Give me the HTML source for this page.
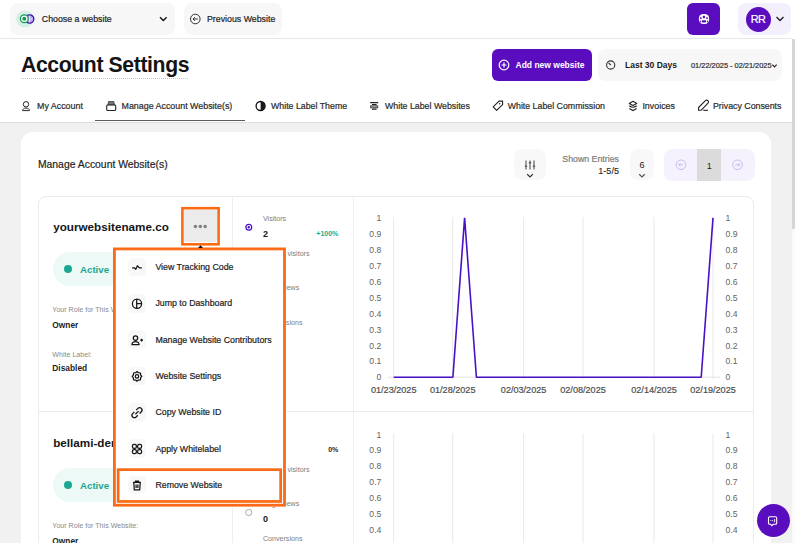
<!DOCTYPE html>
<html><head><meta charset="utf-8">
<style>
*{box-sizing:border-box;margin:0;padding:0}
html,body{width:795px;height:543px;overflow:hidden;background:#fff}
body{position:relative;font-family:"Liberation Sans",sans-serif;color:#1f1f1f}
.a{position:absolute}
.t{position:absolute;white-space:nowrap;line-height:1}
svg{position:absolute;overflow:visible}
</style></head>
<body>
<div class="a" style="left:0px;top:122px;width:792px;height:421px;background:#f1f1f1;border-radius:0px;"></div>
<div class="a" style="left:0px;top:122px;width:792px;height:1px;background:#dedede;border-radius:0px;"></div>
<div class="a" style="left:792px;top:39px;width:3px;height:504px;background:#fafafa;border-radius:0px;"></div>
<div class="a" style="left:792px;top:39px;width:3px;height:189.6px;background:#d6d6d6;border-radius:0px;"></div>
<div class="a" style="left:10px;top:3px;width:164.8px;height:32px;background:#f7f7f7;border-radius:8px;"></div>
<svg style="left:0px;top:0px" width="795" height="543" viewBox="0 0 795 543">
  <circle cx="24.9" cy="18.9" r="8.7" fill="#d6efe3"/>
  <circle cx="29.6" cy="19" r="4.2" fill="#b9a6ee" stroke="#3b0eb2" stroke-width="1.3"/>
  <path d="M27.5 19 H32.5 M29.6 15.5 V22.5" stroke="#fff" stroke-width="0.6"/>
  <circle cx="24.3" cy="18.7" r="3.9" fill="#fff" stroke="#139a55" stroke-width="1.3"/>
  <circle cx="24.3" cy="18.7" r="2" fill="#139a55"/>
  <path d="M160 17.2 L163.3 20.5 L166.6 17.2" fill="none" stroke="#111" stroke-width="1.4"/>
</svg>
<div class="t" style="left:41.8px;top:15.00px;font-size:8.8px;font-weight:400;color:#222;-webkit-text-stroke:0.2px #222;">Choose a website</div>
<div class="a" style="left:184px;top:3px;width:98px;height:32px;background:#f7f7f7;border-radius:8px;"></div>
<svg style="left:0px;top:0px" width="795" height="543" viewBox="0 0 795 543">
  <circle cx="195.3" cy="19" r="4.8" fill="none" stroke="#333" stroke-width="1"/>
  <path d="M197.8 19 H193 M194.8 17.2 L193 19 L194.8 20.8" fill="none" stroke="#333" stroke-width="1"/>
</svg>
<div class="t" style="left:207px;top:15.00px;font-size:8.8px;font-weight:400;color:#222;-webkit-text-stroke:0.2px #222;">Previous Website</div>
<div class="a" style="left:687px;top:3px;width:33px;height:32px;background:#5a0cbf;border-radius:6px;"></div>
<svg style="left:0px;top:0px" width="795" height="543" viewBox="0 0 795 543"><rect x="698.9" y="14" width="10.2" height="9.9" rx="4.2" fill="#fff"/>
  <g fill="#5a0cbf">
    <circle cx="703.9" cy="17" r="1.3"/>
    <circle cx="700.8" cy="18.2" r="0.9"/>
    <circle cx="707" cy="18.2" r="0.9"/>
    <rect x="701.8" y="20.2" width="4.3" height="2.4" rx="0.8"/>
    <rect x="699.9" y="20.4" width="1" height="2" rx="0.4"/>
    <rect x="707" y="20.4" width="1" height="2" rx="0.4"/>
  </g></svg>
<div class="a" style="left:738px;top:3px;width:53px;height:32px;background:#f3effc;border-radius:8px;"></div>
<div class="a" style="left:745.5px;top:6.5px;width:25.0px;height:25.0px;background:#5a0cbf;border-radius:13px;"></div>
<div class="t" style="left:758px;transform:translateX(-50%);top:14.00px;font-size:10.9px;font-weight:400;color:#fff;letter-spacing:-0.7px;-webkit-text-stroke:0.2px #fff;">RR</div>
<svg style="left:0px;top:0px" width="795" height="543" viewBox="0 0 795 543"><path d="M776.5 17 L780 20.5 L783.5 17" fill="none" stroke="#222" stroke-width="1.4"/></svg>
<div class="a" style="left:0px;top:38px;width:792px;height:1px;background:#e6e6e6;border-radius:0px;"></div>
<div class="t" style="left:21px;top:54.00px;font-size:21.2px;font-weight:700;color:#141414;letter-spacing:-0.38px;">Account Settings</div>
<div class="a" style="left:21px;top:78px;width:168px;height:1px;background:linear-gradient(to right,#c8c8c8 50%,transparent 50%);border-radius:0px;background-size:2px 1px"></div>
<div class="a" style="left:492px;top:49px;width:100px;height:32px;background:#5a0cbf;border-radius:6px;"></div>
<svg style="left:0px;top:0px" width="795" height="543" viewBox="0 0 795 543">
  <circle cx="504" cy="65" r="4.8" fill="none" stroke="#fff" stroke-width="1.2"/>
  <path d="M504 62.5 V67.5 M501.5 65 H506.5" stroke="#fff" stroke-width="1.2"/>
</svg>
<div class="t" style="left:515.5px;top:61.00px;font-size:8.5px;font-weight:700;color:#fff;">Add new website</div>
<div class="a" style="left:598px;top:49px;width:184px;height:32px;background:#f7f7f7;border-radius:8px;"></div>
<svg style="left:0px;top:0px" width="795" height="543" viewBox="0 0 795 543">
  <circle cx="610.7" cy="65" r="4.1" fill="none" stroke="#333" stroke-width="1.1"/>
  <path d="M608.6 62.9 L610.8 65.1" fill="none" stroke="#333" stroke-width="1.3"/>
  <path d="M772.3 64.6 L774.5 66.8 L776.7 64.6" fill="none" stroke="#222" stroke-width="1.2"/>
</svg>
<div class="t" style="left:625px;top:61.00px;font-size:8.5px;font-weight:700;color:#1a1a1a;">Last 30 Days</div>
<div class="t" style="left:691px;top:62.00px;font-size:7.4px;font-weight:400;color:#2e2e2e;-webkit-text-stroke:0.2px #2e2e2e;">01/22/2025 - 02/21/2025</div>
<svg style="left:0px;top:0px" width="795" height="543" viewBox="0 0 795 543">
  <circle cx="26" cy="104.3" r="2.7" fill='none' stroke='#2a2a2a' stroke-width='1' stroke-width="1.1"/>
  <path d="M22.5 110.6 C22.5 107.2 29.5 107.2 29.5 110.6 Z" fill='none' stroke='#2a2a2a' stroke-width='1' stroke-width="1.1"/>
</svg>
<div class="t" style="left:37px;top:102.00px;font-size:8.9px;font-weight:400;color:#2a2a2a;-webkit-text-stroke:0.2px #2a2a2a;">My Account</div>
<svg style="left:0px;top:0px" width="795" height="543" viewBox="0 0 795 543">
  <rect x="106.7" y="104.9" width="9" height="5.6" rx="1.3" fill="none" stroke="#222" stroke-width="1.1"/>
  <path d="M108 104.6 L108.5 101.6 H113.9 L114.4 104.6 Z" fill="#777" stroke="#333" stroke-width="0.8"/>
</svg>
<div class="t" style="left:121.5px;top:102.00px;font-size:8.9px;font-weight:400;color:#2a2a2a;-webkit-text-stroke:0.2px #2a2a2a;">Manage Account Website(s)</div>
<div class="a" style="left:95px;top:119.5px;width:150px;height:1.2999999999999972px;background:#5a5a5a;border-radius:0px;"></div>
<svg style="left:0px;top:0px" width="795" height="543" viewBox="0 0 795 543">
  <circle cx="260.6" cy="106" r="4.5" fill='none' stroke='#111' stroke-width='1.3'/>
  <path d="M260.6 101.5 A4.5 4.5 0 0 1 260.6 110.5 Z" fill="#1a1a1a"/>
</svg>
<div class="t" style="left:271px;top:102.00px;font-size:8.8px;font-weight:400;color:#2a2a2a;-webkit-text-stroke:0.2px #2a2a2a;">White Label Theme</div>
<svg style="left:0px;top:0px" width="795" height="543" viewBox="0 0 795 543">
  <path d="M370.2 102.6 H378.2 M372 104.5 H376.6 M372 109.1 H376.6" fill="none" stroke="#222" stroke-width="1.1"/>
  <rect x="370.6" y="105.8" width="7.2" height="2" fill="#aaa" stroke="#333" stroke-width="0.8"/>
</svg>
<div class="t" style="left:385px;top:102.00px;font-size:8.8px;font-weight:400;color:#2a2a2a;-webkit-text-stroke:0.2px #2a2a2a;">White Label Websites</div>
<svg style="left:0px;top:0px" width="795" height="543" viewBox="0 0 795 543">
  <path d="M499 101.1 H502.6 V104.7 L496.6 110.4 L493.2 106.9 Z" fill="none" stroke="#222" stroke-width="1.1" stroke-linejoin="round"/>
  <circle cx="499.6" cy="103.7" r="0.75" fill="#222"/>
</svg>
<div class="t" style="left:507.7px;top:102.00px;font-size:8.8px;font-weight:400;color:#2a2a2a;-webkit-text-stroke:0.2px #2a2a2a;">White Label Commission</div>
<svg style="left:0px;top:0px" width="795" height="543" viewBox="0 0 795 543">
  <path d="M629.3 103.4 L633 101.3 L636.7 103.4 L633 105.5 Z" fill="none" stroke="#222" stroke-width="1.1" stroke-linejoin="round"/>
  <path d="M629.3 105.8 Q633 108.8 636.7 105.8 M629.3 108.4 L633 110.5 L636.7 108.4" fill="none" stroke="#222" stroke-width="1.1"/>
</svg>
<div class="t" style="left:642.4px;top:102.00px;font-size:8.9px;font-weight:400;color:#2a2a2a;-webkit-text-stroke:0.2px #2a2a2a;">Invoices</div>
<svg style="left:0px;top:0px" width="795" height="543" viewBox="0 0 795 543">
  <path d="M698.5 110.3 L698.6 107.5 L705.4 100.7 A1.6 1.6 0 0 1 708 103.2 L701.3 110.2 Z" fill="none" stroke="#222" stroke-width="1.1" stroke-linejoin="round"/>
  <path d="M703.3 110.3 H708" stroke="#222" stroke-width="1.1"/>
</svg>
<div class="t" style="left:713px;top:102.00px;font-size:8.8px;font-weight:400;color:#2a2a2a;-webkit-text-stroke:0.2px #2a2a2a;">Privacy Consents</div>
<div class="a" style="left:20.5px;top:132px;width:750.0px;height:468px;background:#ffffff;border-radius:12px;"></div>
<div class="t" style="left:37.9px;top:160.00px;font-size:10.4px;font-weight:400;color:#1f1f1f;-webkit-text-stroke:0.2px #1f1f1f;">Manage Account Website(s)</div>
<div class="a" style="left:514px;top:148.8px;width:32px;height:31.69999999999999px;background:#f8f8f8;border-radius:8px;"></div>
<svg style="left:0px;top:0px" width="795" height="543" viewBox="0 0 795 543">
  <path d="M526 160.5 V169.5 M530 160.5 V169.5 M534 160.5 V169.5" fill="none" stroke="#3a3a3a" stroke-width="0.95"/>
  <path d="M524.8 166.2 H527.2 M528.8 162.8 H531.2 M532.8 166.2 H535.2" fill="none" stroke="#3a3a3a" stroke-width="0.95"/>
  <path d="M527.2 174.3 L530 177 L532.8 174.3" fill="none" stroke="#333" stroke-width="1.2"/>
</svg>
<div class="t" style="right:176px;top:155.00px;font-size:8.8px;font-weight:400;color:#7c7c7c;-webkit-text-stroke:0.2px #7c7c7c;">Shown Entries</div>
<div class="t" style="right:176px;top:167.00px;font-size:9.1px;font-weight:400;color:#1f1f1f;-webkit-text-stroke:0.1px #1f1f1f;">1-5/5</div>
<div class="a" style="left:630px;top:148.8px;width:24px;height:31.69999999999999px;background:#f8f8f8;border-radius:8px;"></div>
<div class="t" style="left:642px;transform:translateX(-50%);top:161.00px;font-size:9px;font-weight:400;color:#1a1a1a;">6</div>
<svg style="left:0px;top:0px" width="795" height="543" viewBox="0 0 795 543"><path d="M639.2 174.3 L642 177 L644.8 174.3" fill="none" stroke="#555" stroke-width="1.2"/></svg>
<div class="a" style="left:664.2px;top:148.6px;width:90.39999999999998px;height:32.099999999999994px;background:#f5f2fd;border-radius:8px;"></div>
<div class="a" style="left:697.4px;top:148.6px;width:23.800000000000068px;height:32.099999999999994px;background:#dbdbdb;border-radius:0px;"></div>
<div class="t" style="left:709.3px;transform:translateX(-50%);top:162.00px;font-size:9px;font-weight:400;color:#1a1a1a;">1</div>
<svg style="left:0px;top:0px" width="795" height="543" viewBox="0 0 795 543">
  <circle cx="681" cy="164.8" r="4.8" fill="none" stroke="#cdb9f2" stroke-width="1"/>
  <path d="M683.3 164.8 H678.8 M680.5 163 L678.8 164.8 L680.5 166.6" fill="none" stroke="#cdb9f2" stroke-width="1"/>
  <circle cx="737.5" cy="164.8" r="4.8" fill="none" stroke="#cdb9f2" stroke-width="1"/>
  <path d="M735.2 164.8 H739.7 M738 163 L739.7 164.8 L738 166.6" fill="none" stroke="#cdb9f2" stroke-width="1"/>
</svg>
<div class="a" style="left:38px;top:196px;width:715.5px;height:444px;background:#ffffff;border-radius:8px;border:1px solid #ebebeb"></div>
<div class="a" style="left:38px;top:411px;width:715.5px;height:1px;background:#ebebeb;border-radius:0px;"></div>
<div class="a" style="left:232px;top:196px;width:1px;height:444px;background:#efefef;border-radius:0px;"></div>
<div class="a" style="left:352.5px;top:196px;width:1.0px;height:444px;background:#efefef;border-radius:0px;"></div>
<div class="t" style="left:53.2px;top:221.00px;font-size:11.7px;font-weight:700;color:#161616;">yourwebsitename.co</div>
<div class="a" style="left:53px;top:252px;width:147px;height:34.39999999999998px;background:#ecf9f6;border-radius:17px;"></div>
<div class="a" style="left:64.3px;top:265.2px;width:8px;height:8px;border-radius:50%;background:#1aa890"></div>
<div class="t" style="left:80px;top:265.00px;font-size:9.7px;font-weight:700;color:#1aa890;">Active</div>
<div class="t" style="left:52.3px;top:307.00px;font-size:7.1px;font-weight:400;color:#8a8a8a;">Your Role for This Website:</div>
<div class="t" style="left:52.3px;top:321.00px;font-size:8.4px;font-weight:700;color:#1f1f1f;">Owner</div>
<div class="t" style="left:52.3px;top:352.00px;font-size:7.1px;font-weight:400;color:#8a8a8a;">White Label:</div>
<div class="t" style="left:52.3px;top:364.00px;font-size:8.4px;font-weight:700;color:#1f1f1f;">Disabled</div>
<div class="t" style="left:263px;top:216.00px;font-size:7.1px;font-weight:400;color:#7e7e7e;">Visitors</div>
<div class="t" style="left:263px;top:230.00px;font-size:9px;font-weight:700;color:#161616;">2</div>
<svg style="left:0px;top:0px" width="795" height="543" viewBox="0 0 795 543"><circle cx="248.8" cy="227.3" r="2.9" fill="none" stroke="#4a10c6" stroke-width="1.2"/><circle cx="248.8" cy="227.3" r="1.2" fill="#4a10c6"/></svg>
<div class="t" style="left:263px;top:251.00px;font-size:7.1px;font-weight:400;color:#7e7e7e;">Unique visitors</div>
<div class="t" style="left:263px;top:265.00px;font-size:9px;font-weight:700;color:#161616;">1</div>
<svg style="left:0px;top:0px" width="795" height="543" viewBox="0 0 795 543"><circle cx="248.7" cy="261.9" r="3.1" fill="none" stroke="#a0a0a0" stroke-width="0.9"/></svg>
<div class="t" style="left:263px;top:285.00px;font-size:7.1px;font-weight:400;color:#7e7e7e;">Page views</div>
<div class="t" style="left:263px;top:299.00px;font-size:9px;font-weight:700;color:#161616;">2</div>
<svg style="left:0px;top:0px" width="795" height="543" viewBox="0 0 795 543"><circle cx="248.7" cy="296.5" r="3.1" fill="none" stroke="#a0a0a0" stroke-width="0.9"/></svg>
<div class="t" style="left:263px;top:320.00px;font-size:7.1px;font-weight:400;color:#7e7e7e;">Conversions</div>
<div class="t" style="left:263px;top:334.00px;font-size:9px;font-weight:700;color:#161616;">0</div>
<svg style="left:0px;top:0px" width="795" height="543" viewBox="0 0 795 543"><circle cx="248.7" cy="331.1" r="3.1" fill="none" stroke="#a0a0a0" stroke-width="0.9"/></svg>
<div class="t" style="right:456.7px;top:230.00px;font-size:7px;font-weight:700;color:#16ad8c;">+100%</div>
<svg style="left:0px;top:0px" width="795" height="543" viewBox="0 0 795 543"><line x1="393.7" y1="216.9" x2="393.7" y2="379.7" stroke="#e9e9e9" stroke-width="1"/><line x1="452.7" y1="216.9" x2="452.7" y2="379.7" stroke="#e9e9e9" stroke-width="1"/><line x1="523.6" y1="216.9" x2="523.6" y2="379.7" stroke="#e9e9e9" stroke-width="1"/><line x1="583" y1="216.9" x2="583" y2="379.7" stroke="#e9e9e9" stroke-width="1"/><line x1="654" y1="216.9" x2="654" y2="379.7" stroke="#e9e9e9" stroke-width="1"/><line x1="713" y1="216.9" x2="713" y2="379.7" stroke="#e9e9e9" stroke-width="1"/><line x1="388" y1="377.2" x2="720" y2="377.2" stroke="#e3e3e3" stroke-width="1"/></svg>
<div class="t" style="right:413.7px;top:373.00px;font-size:8.6px;font-weight:400;color:#626262;">0</div>
<div class="t" style="left:725.6px;top:373.00px;font-size:8.6px;font-weight:400;color:#626262;">0</div>
<div class="t" style="right:413.7px;top:357.00px;font-size:8.6px;font-weight:400;color:#626262;">0.1</div>
<div class="t" style="left:725.6px;top:357.00px;font-size:8.6px;font-weight:400;color:#626262;">0.1</div>
<div class="t" style="right:413.7px;top:342.00px;font-size:8.6px;font-weight:400;color:#626262;">0.2</div>
<div class="t" style="left:725.6px;top:342.00px;font-size:8.6px;font-weight:400;color:#626262;">0.2</div>
<div class="t" style="right:413.7px;top:326.00px;font-size:8.6px;font-weight:400;color:#626262;">0.3</div>
<div class="t" style="left:725.6px;top:326.00px;font-size:8.6px;font-weight:400;color:#626262;">0.3</div>
<div class="t" style="right:413.7px;top:310.00px;font-size:8.6px;font-weight:400;color:#626262;">0.4</div>
<div class="t" style="left:725.6px;top:310.00px;font-size:8.6px;font-weight:400;color:#626262;">0.4</div>
<div class="t" style="right:413.7px;top:294.00px;font-size:8.6px;font-weight:400;color:#626262;">0.5</div>
<div class="t" style="left:725.6px;top:294.00px;font-size:8.6px;font-weight:400;color:#626262;">0.5</div>
<div class="t" style="right:413.7px;top:278.00px;font-size:8.6px;font-weight:400;color:#626262;">0.6</div>
<div class="t" style="left:725.6px;top:278.00px;font-size:8.6px;font-weight:400;color:#626262;">0.6</div>
<div class="t" style="right:413.7px;top:262.00px;font-size:8.6px;font-weight:400;color:#626262;">0.7</div>
<div class="t" style="left:725.6px;top:262.00px;font-size:8.6px;font-weight:400;color:#626262;">0.7</div>
<div class="t" style="right:413.7px;top:246.00px;font-size:8.6px;font-weight:400;color:#626262;">0.8</div>
<div class="t" style="left:725.6px;top:246.00px;font-size:8.6px;font-weight:400;color:#626262;">0.8</div>
<div class="t" style="right:413.7px;top:230.00px;font-size:8.6px;font-weight:400;color:#626262;">0.9</div>
<div class="t" style="left:725.6px;top:230.00px;font-size:8.6px;font-weight:400;color:#626262;">0.9</div>
<div class="t" style="right:413.7px;top:214.00px;font-size:8.6px;font-weight:400;color:#626262;">1</div>
<div class="t" style="left:725.6px;top:214.00px;font-size:8.6px;font-weight:400;color:#626262;">1</div>
<div class="t" style="left:393.7px;transform:translateX(-50%);top:386.00px;font-size:9.1px;font-weight:400;color:#4e4e4e;-webkit-text-stroke:0.2px #4e4e4e;">01/23/2025</div>
<div class="t" style="left:452.7px;transform:translateX(-50%);top:386.00px;font-size:9.1px;font-weight:400;color:#4e4e4e;-webkit-text-stroke:0.2px #4e4e4e;">01/28/2025</div>
<div class="t" style="left:523.6px;transform:translateX(-50%);top:386.00px;font-size:9.1px;font-weight:400;color:#4e4e4e;-webkit-text-stroke:0.2px #4e4e4e;">02/03/2025</div>
<div class="t" style="left:583px;transform:translateX(-50%);top:386.00px;font-size:9.1px;font-weight:400;color:#4e4e4e;-webkit-text-stroke:0.2px #4e4e4e;">02/08/2025</div>
<div class="t" style="left:654px;transform:translateX(-50%);top:386.00px;font-size:9.1px;font-weight:400;color:#4e4e4e;-webkit-text-stroke:0.2px #4e4e4e;">02/14/2025</div>
<div class="t" style="left:713px;transform:translateX(-50%);top:386.00px;font-size:9.1px;font-weight:400;color:#4e4e4e;-webkit-text-stroke:0.2px #4e4e4e;">02/19/2025</div>
<svg style="left:0px;top:0px" width="795" height="543" viewBox="0 0 795 543"><polyline points="393.7,377.2 452.9,377.2 464.6,217.9 476.4,377.2 701.2,377.2 713,217.9" fill="none" stroke="#4a10c6" stroke-width="1.6" stroke-linejoin="bevel"/></svg>
<div class="t" style="left:53.2px;top:437.00px;font-size:11.7px;font-weight:700;color:#161616;">bellami-demo.com</div>
<div class="a" style="left:53px;top:468px;width:147px;height:34.39999999999998px;background:#ecf9f6;border-radius:17px;"></div>
<div class="a" style="left:64.3px;top:481.2px;width:8px;height:8px;border-radius:50%;background:#1aa890"></div>
<div class="t" style="left:80px;top:481.00px;font-size:9.7px;font-weight:700;color:#1aa890;">Active</div>
<div class="t" style="left:52.3px;top:523.00px;font-size:7.1px;font-weight:400;color:#8a8a8a;">Your Role for This Website:</div>
<div class="t" style="left:52.3px;top:537.00px;font-size:8.4px;font-weight:700;color:#1f1f1f;">Owner</div>
<div class="t" style="left:52.3px;top:568.00px;font-size:7.1px;font-weight:400;color:#8a8a8a;">White Label:</div>
<div class="t" style="left:52.3px;top:580.00px;font-size:8.4px;font-weight:700;color:#1f1f1f;">Disabled</div>
<div class="t" style="left:263px;top:432.00px;font-size:7.1px;font-weight:400;color:#7e7e7e;">Visitors</div>
<div class="t" style="left:263px;top:446.00px;font-size:9px;font-weight:700;color:#161616;">0</div>
<svg style="left:0px;top:0px" width="795" height="543" viewBox="0 0 795 543"><circle cx="248.8" cy="443.3" r="2.9" fill="none" stroke="#4a10c6" stroke-width="1.2"/><circle cx="248.8" cy="443.3" r="1.2" fill="#4a10c6"/></svg>
<div class="t" style="left:263px;top:467.00px;font-size:7.1px;font-weight:400;color:#7e7e7e;">Unique visitors</div>
<div class="t" style="left:263px;top:481.00px;font-size:9px;font-weight:700;color:#161616;">0</div>
<svg style="left:0px;top:0px" width="795" height="543" viewBox="0 0 795 543"><circle cx="248.7" cy="477.9" r="3.1" fill="none" stroke="#a0a0a0" stroke-width="0.9"/></svg>
<div class="t" style="left:263px;top:501.00px;font-size:7.1px;font-weight:400;color:#7e7e7e;">Page views</div>
<div class="t" style="left:263px;top:515.00px;font-size:9px;font-weight:700;color:#161616;">0</div>
<svg style="left:0px;top:0px" width="795" height="543" viewBox="0 0 795 543"><circle cx="248.7" cy="512.5" r="3.1" fill="none" stroke="#a0a0a0" stroke-width="0.9"/></svg>
<div class="t" style="left:263px;top:536.00px;font-size:7.1px;font-weight:400;color:#7e7e7e;">Conversions</div>
<div class="t" style="left:263px;top:550.00px;font-size:9px;font-weight:700;color:#161616;">0</div>
<svg style="left:0px;top:0px" width="795" height="543" viewBox="0 0 795 543"><circle cx="248.7" cy="547.1" r="3.1" fill="none" stroke="#a0a0a0" stroke-width="0.9"/></svg>
<div class="t" style="right:456.7px;top:446.00px;font-size:7px;font-weight:700;color:#1f1f1f;">0%</div>
<svg style="left:0px;top:0px" width="795" height="543" viewBox="0 0 795 543"><line x1="393.7" y1="433.3" x2="393.7" y2="596.1" stroke="#e9e9e9" stroke-width="1"/><line x1="452.7" y1="433.3" x2="452.7" y2="596.1" stroke="#e9e9e9" stroke-width="1"/><line x1="523.6" y1="433.3" x2="523.6" y2="596.1" stroke="#e9e9e9" stroke-width="1"/><line x1="583" y1="433.3" x2="583" y2="596.1" stroke="#e9e9e9" stroke-width="1"/><line x1="654" y1="433.3" x2="654" y2="596.1" stroke="#e9e9e9" stroke-width="1"/><line x1="713" y1="433.3" x2="713" y2="596.1" stroke="#e9e9e9" stroke-width="1"/><line x1="388" y1="593.6" x2="720" y2="593.6" stroke="#e3e3e3" stroke-width="1"/></svg>
<div class="t" style="right:413.7px;top:590.00px;font-size:8.6px;font-weight:400;color:#626262;">0</div>
<div class="t" style="left:725.6px;top:590.00px;font-size:8.6px;font-weight:400;color:#626262;">0</div>
<div class="t" style="right:413.7px;top:574.00px;font-size:8.6px;font-weight:400;color:#626262;">0.1</div>
<div class="t" style="left:725.6px;top:574.00px;font-size:8.6px;font-weight:400;color:#626262;">0.1</div>
<div class="t" style="right:413.7px;top:558.00px;font-size:8.6px;font-weight:400;color:#626262;">0.2</div>
<div class="t" style="left:725.6px;top:558.00px;font-size:8.6px;font-weight:400;color:#626262;">0.2</div>
<div class="t" style="right:413.7px;top:542.00px;font-size:8.6px;font-weight:400;color:#626262;">0.3</div>
<div class="t" style="left:725.6px;top:542.00px;font-size:8.6px;font-weight:400;color:#626262;">0.3</div>
<div class="t" style="right:413.7px;top:526.00px;font-size:8.6px;font-weight:400;color:#626262;">0.4</div>
<div class="t" style="left:725.6px;top:526.00px;font-size:8.6px;font-weight:400;color:#626262;">0.4</div>
<div class="t" style="right:413.7px;top:510.00px;font-size:8.6px;font-weight:400;color:#626262;">0.5</div>
<div class="t" style="left:725.6px;top:510.00px;font-size:8.6px;font-weight:400;color:#626262;">0.5</div>
<div class="t" style="right:413.7px;top:494.00px;font-size:8.6px;font-weight:400;color:#626262;">0.6</div>
<div class="t" style="left:725.6px;top:494.00px;font-size:8.6px;font-weight:400;color:#626262;">0.6</div>
<div class="t" style="right:413.7px;top:478.00px;font-size:8.6px;font-weight:400;color:#626262;">0.7</div>
<div class="t" style="left:725.6px;top:478.00px;font-size:8.6px;font-weight:400;color:#626262;">0.7</div>
<div class="t" style="right:413.7px;top:462.00px;font-size:8.6px;font-weight:400;color:#626262;">0.8</div>
<div class="t" style="left:725.6px;top:462.00px;font-size:8.6px;font-weight:400;color:#626262;">0.8</div>
<div class="t" style="right:413.7px;top:446.00px;font-size:8.6px;font-weight:400;color:#626262;">0.9</div>
<div class="t" style="left:725.6px;top:446.00px;font-size:8.6px;font-weight:400;color:#626262;">0.9</div>
<div class="t" style="right:413.7px;top:431.00px;font-size:8.6px;font-weight:400;color:#626262;">1</div>
<div class="t" style="left:725.6px;top:431.00px;font-size:8.6px;font-weight:400;color:#626262;">1</div>
<div class="t" style="left:393.7px;transform:translateX(-50%);top:602.00px;font-size:9.1px;font-weight:400;color:#4e4e4e;-webkit-text-stroke:0.2px #4e4e4e;">01/23/2025</div>
<div class="t" style="left:452.7px;transform:translateX(-50%);top:602.00px;font-size:9.1px;font-weight:400;color:#4e4e4e;-webkit-text-stroke:0.2px #4e4e4e;">01/28/2025</div>
<div class="t" style="left:523.6px;transform:translateX(-50%);top:602.00px;font-size:9.1px;font-weight:400;color:#4e4e4e;-webkit-text-stroke:0.2px #4e4e4e;">02/03/2025</div>
<div class="t" style="left:583px;transform:translateX(-50%);top:602.00px;font-size:9.1px;font-weight:400;color:#4e4e4e;-webkit-text-stroke:0.2px #4e4e4e;">02/08/2025</div>
<div class="t" style="left:654px;transform:translateX(-50%);top:602.00px;font-size:9.1px;font-weight:400;color:#4e4e4e;-webkit-text-stroke:0.2px #4e4e4e;">02/14/2025</div>
<div class="t" style="left:713px;transform:translateX(-50%);top:602.00px;font-size:9.1px;font-weight:400;color:#4e4e4e;-webkit-text-stroke:0.2px #4e4e4e;">02/19/2025</div>
<div class="a" style="left:184.4px;top:210.2px;width:32.400000000000006px;height:32.0px;background:#ebebeb;border-radius:2px;"></div>
<svg style="left:0px;top:0px" width="795" height="543" viewBox="0 0 795 543"><g fill="#808080"><circle cx="195.4" cy="226.6" r="1.75"/><circle cx="200.3" cy="226.6" r="1.75"/><circle cx="205.2" cy="226.6" r="1.75"/></g></svg>
<svg style="left:0;top:0" width="795" height="543"><rect x="182.40" y="208.20" width="36.20" height="36.10" fill="none" stroke="#fb6a14" stroke-width="2.6"/></svg>
<div class="a" style="left:113.2px;top:247.5px;width:172.60000000000002px;height:259.1px;background:#ffffff;border-radius:0px;"></div>
<svg style="left:0;top:0" width="795" height="543"><rect x="114.40" y="248.90" width="170.10" height="256.30" fill="none" stroke="#fb6a14" stroke-width="2.8"/></svg>
<svg style="left:0px;top:0px" width="795" height="543" viewBox="0 0 795 543"><path d="M198 248 L200.5 245.3 L203 248 Z" fill="#111"/></svg>
<div class="a" style="left:127.7px;top:257.8px;width:18.499999999999986px;height:18.5px;background:#f8f8f8;border-radius:5px;"></div>
<svg style="left:0px;top:0px" width="795" height="543" viewBox="0 0 795 543"><path d="M132.1 267.79999999999995 H134.6 L135.8 269.29999999999995 L137.4 265.7 L139.3 267.79999999999995 H141.8" fill='none' stroke='#151515' stroke-width='1.25' stroke-width="1.35" stroke-linejoin="round"/></svg>
<div class="t" style="left:155.4px;top:263.00px;font-size:8.8px;font-weight:400;color:#222;-webkit-text-stroke:0.2px #222;">View Tracking Code</div>
<div class="a" style="left:127.7px;top:294.13px;width:18.499999999999986px;height:18.5px;background:#f8f8f8;border-radius:5px;"></div>
<svg style="left:0px;top:0px" width="795" height="543" viewBox="0 0 795 543"><circle cx="137" cy="303.7" r="4.6" fill='none' stroke='#151515' stroke-width='1.25'/><path d="M136.7 299.09999999999997 V308.3 M136.7 303.7 H141.6" fill='none' stroke='#151515' stroke-width='1.25'/></svg>
<div class="t" style="left:155.4px;top:299.00px;font-size:8.8px;font-weight:400;color:#222;-webkit-text-stroke:0.2px #222;">Jump to Dashboard</div>
<div class="a" style="left:127.7px;top:330.46px;width:18.499999999999986px;height:18.5px;background:#f8f8f8;border-radius:5px;"></div>
<svg style="left:0px;top:0px" width="795" height="543" viewBox="0 0 795 543"><circle cx="135.5" cy="338.1" r="2.2" fill='none' stroke='#151515' stroke-width='1.25'/><path d="M132 344.6 C132 340.6 139 340.6 139 344.6 Z" fill='none' stroke='#151515' stroke-width='1.25'/><path d="M140.2 340.1 H143 M141.6 338.70000000000005 V341.5" fill='none' stroke='#151515' stroke-width='1.25'/></svg>
<div class="t" style="left:155.4px;top:336.00px;font-size:8.8px;font-weight:400;color:#222;-webkit-text-stroke:0.2px #222;">Manage Website Contributors</div>
<div class="a" style="left:127.7px;top:366.79px;width:18.499999999999986px;height:18.5px;background:#f8f8f8;border-radius:5px;"></div>
<svg style="left:0px;top:0px" width="795" height="543" viewBox="0 0 795 543"><circle cx="137" cy="376.4" r="1.7" fill='none' stroke='#151515' stroke-width='1.25'/><path d="M137 371.59999999999997 L138.3 372.7 L140.4 373.0 L140.7 375.09999999999997 L141.8 376.4 L140.7 377.7 L140.4 379.79999999999995 L138.3 380.09999999999997 L137 381.2 L135.7 380.09999999999997 L133.6 379.79999999999995 L133.3 377.7 L132.2 376.4 L133.3 375.09999999999997 L133.6 373.0 L135.7 372.7 Z" fill='none' stroke='#151515' stroke-width='1.25' stroke-linejoin="round"/></svg>
<div class="t" style="left:155.4px;top:372.00px;font-size:8.8px;font-weight:400;color:#222;-webkit-text-stroke:0.2px #222;">Website Settings</div>
<div class="a" style="left:127.7px;top:403.12px;width:18.499999999999986px;height:18.5px;background:#f8f8f8;border-radius:5px;"></div>
<svg style="left:0px;top:0px" width="795" height="543" viewBox="0 0 795 543"><path d="M136.2 410.09999999999997 L137.9 408.4 A2.4 2.4 0 0 1 141.3 411.8 L139.6 413.5 M137.8 415.3 L136.1 417.0 A2.4 2.4 0 0 1 132.7 413.59999999999997 L134.4 411.9 M135.4 414.3 L138.6 411.09999999999997" fill='none' stroke='#151515' stroke-width='1.25'/></svg>
<div class="t" style="left:155.4px;top:408.00px;font-size:8.8px;font-weight:400;color:#222;-webkit-text-stroke:0.2px #222;">Copy Website ID</div>
<div class="a" style="left:127.7px;top:439.45px;width:18.499999999999986px;height:18.5px;background:#f8f8f8;border-radius:5px;"></div>
<svg style="left:0px;top:0px" width="795" height="543" viewBox="0 0 795 543"><rect x="132.4" y="444.4" width="4" height="4" rx="1.6" fill='none' stroke='#151515' stroke-width='1.25'/><rect x="137.6" y="444.4" width="4" height="4" rx="1.6" fill='none' stroke='#151515' stroke-width='1.25'/><rect x="132.4" y="449.6" width="4" height="4" rx="1.6" fill='none' stroke='#151515' stroke-width='1.25'/><rect x="137.6" y="449.6" width="4" height="4" rx="1.6" fill='none' stroke='#151515' stroke-width='1.25'/></svg>
<div class="t" style="left:155.4px;top:445.00px;font-size:8.8px;font-weight:400;color:#222;-webkit-text-stroke:0.2px #222;">Apply Whitelabel</div>
<div class="a" style="left:127.7px;top:475.78000000000003px;width:18.499999999999986px;height:18.5px;background:#f8f8f8;border-radius:5px;"></div>
<svg style="left:0px;top:0px" width="795" height="543" viewBox="0 0 795 543"><path d="M133 482.4 H141 M135.5 482.4 V481.09999999999997 H138.5 V482.4 M133.8 482.4 L134.3 489.9 H139.7 L140.2 482.4 M136.1 484.59999999999997 V487.9 M137.9 484.59999999999997 V487.9" fill='none' stroke='#151515' stroke-width='1.25'/></svg>
<div class="t" style="left:155.4px;top:481.00px;font-size:8.8px;font-weight:400;color:#222;-webkit-text-stroke:0.2px #222;">Remove Website</div>
<svg style="left:0;top:0" width="795" height="543"><rect x="118.15" y="469.65" width="162.50" height="31.80" fill="none" stroke="#fb6a14" stroke-width="2.7"/></svg>
<div class="a" style="left:755.8px;top:503.5px;width:34.40000000000009px;height:34.39999999999998px;background:#ffffff;border-radius:18px;"></div>
<div class="a" style="left:756.5px;top:504.2px;width:33.0px;height:33.00000000000006px;background:#5a0cbf;border-radius:17px;"></div>
<svg style="left:0px;top:0px" width="795" height="543" viewBox="0 0 795 543"><path d="M769.8 516.8 H775.4 A1.3 1.3 0 0 1 776.7 518.1 V523 A1.3 1.3 0 0 1 775.4 524.3 H773.3 L771.9 525.7 L770.6 524.3 H769.8 A1.3 1.3 0 0 1 768.5 523 V518.1 A1.3 1.3 0 0 1 769.8 516.8 Z" fill="none" stroke="#fff" stroke-width="1.1"/><g fill="#fff"><circle cx="770.9" cy="520.6" r="0.55"/><circle cx="772.6" cy="520.6" r="0.55"/><rect x="774.2" y="519" width="0.9" height="3.2"/></g></svg>
</body></html>
